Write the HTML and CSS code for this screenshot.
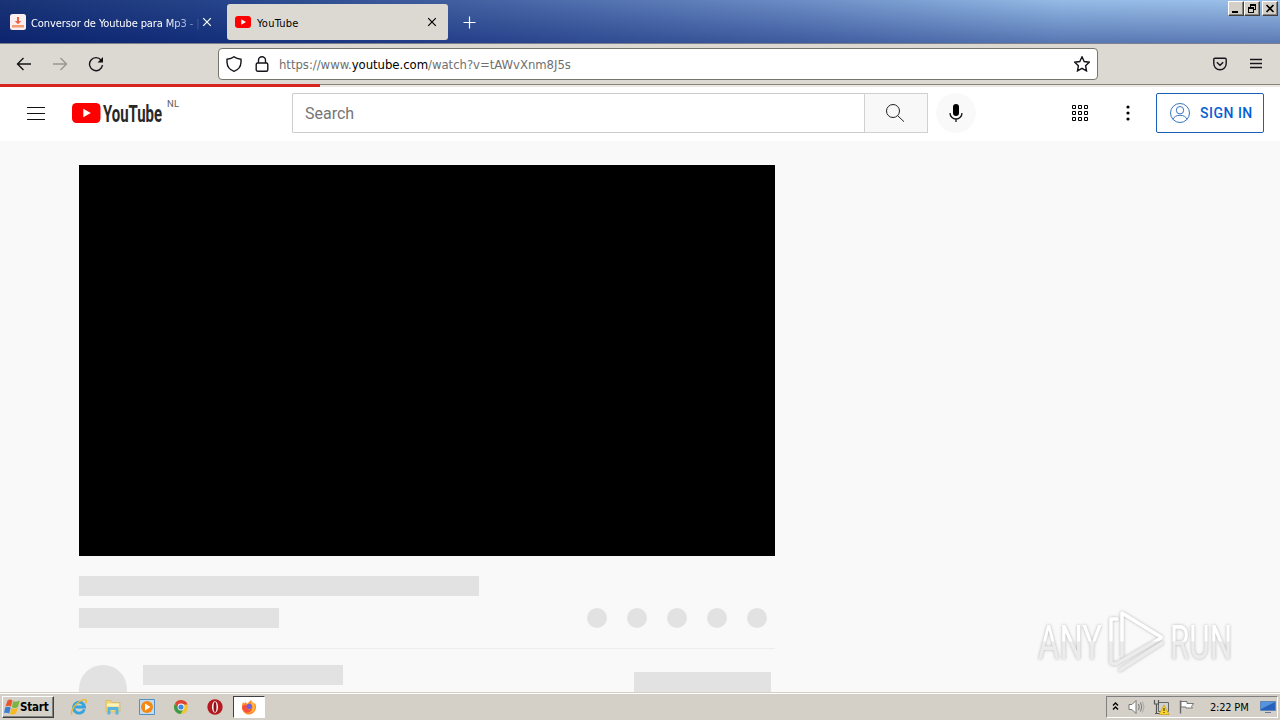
FILE: index.html
```
<!DOCTYPE html>
<html lang="en">
<head>
	<meta charset="UTF-8">
	<title>YouTube</title>
	<link rel="stylesheet" href="styles.css">
</head>
<body>
	<div class="tabs">
		<div class="tab">
			<svg class="favicon" width="16" height="16" viewBox="0 0 16 16"><rect width="16" height="16" rx="2.500" fill="#fbeeee"/><path d="M7 3h2v4h2.200L8 10.300 4.800 7H7z" fill="#ed6248"/><path d="M2 11h12v2.500H2z" fill="#f39a76"/></svg>
			<span class="tab-title fade">Conversor de Youtube para Mp3 - <i>|</i></span>
			<svg class="close" width="10" height="10" viewBox="0 0 10 10"><path d="M1.200 1.200l7.600 7.600M8.800 1.200L1.200 8.800"/></svg>
		</div>
		<div class="tab active">
			<svg class="favicon" width="16" height="16" viewBox="0 0 16 16"><rect y="2" width="16" height="12" rx="3" fill="#f00"/><path d="M6.300 5.300v5.400L11 8z" fill="#fff"/></svg>
			<span class="tab-title">YouTube</span>
			<svg class="close" width="10" height="10" viewBox="0 0 10 10"><path d="M1.200 1.200l7.600 7.600M8.800 1.200L1.200 8.800"/></svg>
		</div>
		<svg class="plus" width="13" height="13" viewBox="0 0 13 13"><path d="M6.500 .5v12M.5 6.500h12"/></svg>
		<div class="win-buttons">
			<span><svg width="14" height="13" viewBox="0 0 14 13"><path d="M3 9h6v2H3z"/></svg></span>
			<span><svg width="14" height="13" viewBox="0 0 14 13"><path d="M5 2h6v6H9V7h1V4H6v1H5zM3 5h6v6H3zM4 7v3h4V7z" fill-rule="evenodd"/></svg></span>
			<span class="x"><svg width="14" height="13" viewBox="0 0 14 13"><path d="M3.500 3l7 7M10.500 3l-7 7" stroke="#000" stroke-width="1.700"/></svg></span>
		</div>
	</div>

	<div class="toolbar">
		<svg class="nav back" width="16" height="16" viewBox="0 0 16 16"><path d="M15 8H1.500M7.500 2L1.500 8l6 6"/></svg>
		<svg class="nav forward" width="16" height="16" viewBox="0 0 16 16"><path d="M1 8h13.500M8.500 2l6 6-6 6"/></svg>
		<svg class="nav reload" width="16" height="16" viewBox="0 0 16 16"><path d="M13.200 4.200A6.500 6.500 0 1 0 14.500 9"/><path d="M15 1v5.500H9.500z" fill="#111" stroke="none"/></svg>
		<div class="urlbar">
			<svg width="16" height="16" viewBox="0 0 16 16"><path d="M8 .8C6 2.500 3.500 3.100 1 3.300v3C1.200 10.500 4 14 8 15.300c4-1.300 6.800-4.800 7-9v-3C12.500 3.100 10 2.500 8 .8z"/></svg>
			<svg class="lock" width="14" height="16" viewBox="0 0 14 16"><rect x="1.200" y="7" width="11.600" height="8.200" rx="1.500"/><path d="M3.500 7V4.300a3.500 3.500 0 0 1 7 0V7"/></svg>
			<span class="url">https://www.<b>youtube.com</b>/watch?v=tAWvXnm8J5s</span>
			<svg class="star" width="16" height="16" viewBox="0 0 16 16"><path d="M8 .8l2.200 4.700 5 .7-3.600 3.500.9 5.200L8 12.400l-4.500 2.500.9-5.200L.8 6.200l5-.7z"/></svg>
		</div>
		<svg class="pocket" width="14" height="14" viewBox="0 0 14 14"><path d="M2 1.200h10q1.200 0 1.200 1.200V6.500a6.200 6.200 0 0 1-12.400 0V2.400Q.8 1.200 2 1.200zM3.800 5.200L7 8.300l3.200-3.100"/></svg>
		<svg class="app-menu" width="12" height="12" viewBox="0 0 12 12"><path d="M0 1.500h12M0 5.500h12M0 9.500h12"/></svg>
	</div>
	<div class="progress"><div class="progress-done"></div></div>

	<div class="masthead">
		<svg class="guide" width="18" height="13" viewBox="0 0 18 13"><path d="M0 .5h18M0 6.500h18M0 12.500h18" stroke="#111"/></svg>
		<svg class="logo" width="91" height="24" viewBox="0 0 91 24">
			<rect y="2" width="28.500" height="20" rx="4.500" fill="#f00"/><path d="M11.300 7.800v8.400l7.500-4.200z" fill="#fff"/>
			<text x="31" y="20.500" textLength="59" lengthAdjust="spacingAndGlyphs">YouTube</text>
		</svg>
		<span class="country">NL</span>
		<div class="search">Search</div>
		<div class="search-btn"><svg width="20" height="20" viewBox="0 0 20 20"><circle cx="8" cy="8" r="6.500" fill="none" stroke="#222"/><path d="M12.700 12.700l6.300 6" stroke="#222"/></svg></div>
		<div class="mic"><svg width="14" height="20" viewBox="0 0 14 20"><rect x="4" y="1" width="6" height="12" rx="3"/><path d="M1 10a6 6 0 0 0 12 0M7 16v3" fill="none" stroke="#111" stroke-width="1.300"/></svg></div>
		<svg class="apps" width="16" height="16" viewBox="0 0 16 16"><path d="M.5.500h3v3h-3zM6.500.500h3v3h-3zM12.500.500h3v3h-3zM.5 6.500h3v3h-3zM6.500 6.500h3v3h-3zM12.500 6.500h3v3h-3zM.5 12.500h3v3h-3zM6.500 12.500h3v3h-3zM12.500 12.500h3v3h-3z" fill="none" stroke="#000"/></svg>
		<svg class="dots" width="4" height="16" viewBox="0 0 4 16"><circle cx="2" cy="2" r="1.600"/><circle cx="2" cy="8" r="1.600"/><circle cx="2" cy="14" r="1.600"/></svg>
		<div class="sign-in">
			<svg width="20" height="20" viewBox="0 0 20 20"><circle cx="10" cy="10" r="9.500"/><circle cx="10" cy="7.200" r="3.700"/><path d="M3 16.300c1-2.700 3.500-4 7-4s6 1.300 7 4"/></svg>
			<span>SIGN IN</span>
		</div>
	</div>

	<div class="page">
		<div class="player"></div>
		<div class="bar title"></div>
		<div class="row">
			<div class="bar views"></div>
			<div class="actions"><i></i><i></i><i></i><i></i><i></i></div>
		</div>
		<div class="owner">
			<div class="avatar"></div>
			<div class="bar name"></div>
			<div class="bar subscribe"></div>
		</div>
	</div>

	<svg class="watermark" width="210" height="72" viewBox="0 0 210 72">
		<defs>
			<linearGradient id="wm" gradientUnits="userSpaceOnUse" x1="0" y1="0" x2="0" y2="72"><stop offset="0" stop-color="#fff"/><stop offset=".48" stop-color="#fff"/><stop offset=".5" stop-color="#ececec"/><stop offset="1" stop-color="#ebebeb"/></linearGradient>
		</defs>
		<g class="wm-shape" fill="url(#wm)">
			<text x="4" y="53" textLength="64" lengthAdjust="spacingAndGlyphs">ANY</text>
			<text x="136" y="53" textLength="62" lengthAdjust="spacingAndGlyphs">RUN</text>
			<path d="M88 50V7l39 24M127 32L82 58M83 13h-6v44l4 1M86 64l42-27" fill="none" stroke="url(#wm)" stroke-width="3.500" stroke-linejoin="round" stroke-linecap="round"/>
		</g>
	</svg>

	<div class="taskbar">
		<div class="start">
			<svg width="16" height="16" viewBox="0 0 16 16"><path d="M3.500 1.500C5.500 0 7 .5 8.500 1.500L7 7.500C5 6.500 3.500 6.500 1.500 7.500z" fill="#e9562a"/><path d="M9.300 2c2 1 4 .8 6.500-.5L14 8c-2 1.200-4 1.200-6.200.2z" fill="#7cb342"/><path d="M1.200 8.500c2-1 3.500-1 5.500 0L5.200 14.500c-2-1-3.500-1-5.200-.5z" fill="#3c7fd0"/><path d="M7.500 9c2 .9 4.200.9 6.200-.2L12 14.800c-2 1-4 1-6 .2z" fill="#f5b921"/></svg>
			<b>Start</b>
		</div>
		<div class="launch">
			<svg width="18" height="18" viewBox="0 0 18 18"><path d="M14.300 11.300A5.500 5.500 0 1 1 14.500 9H5" fill="none" stroke="#35a3dc" stroke-width="2.800"/><path d="M2 16.500C-.5 13 7 3.500 13 1.800c3.500-.8 4 1.200 2.500 3.700" fill="none" stroke="#ebb92e" stroke-width="1.400"/></svg>
			<svg width="18" height="18" viewBox="0 0 18 18"><path d="M2 2.500h5l1 2h8V14H2z" fill="#f0d67b" stroke="#d3b14e" stroke-width=".6"/><path d="M3 5.500h12v3H3z" fill="#fbf2bd"/><path d="M3.500 16.500V10q0-1 1-1h9q1 0 1 1v6.500h-3V12h-5v4.500z" fill="#5bb4df"/></svg>
			<svg width="18" height="18" viewBox="0 0 18 18"><path d="M1.500 1.500h15v15h-15z" fill="#c4dcf0" stroke="#5391c5"/><circle cx="9" cy="9" r="6" fill="#f58813"/><path d="M7 5.500v7L12.500 9z" fill="#fff"/></svg>
			<svg width="18" height="18" viewBox="0 0 18 18"><circle cx="9" cy="9" r="7" fill="#f0c52f"/><path d="M3 5.500A7 7 0 0 1 15.500 6.500H9L6 11z" fill="#dc4438"/><path d="M2.800 5.700A7 7 0 0 0 8.500 16l3-5H7z" fill="#3c9b4b"/><circle cx="9" cy="9" r="3.400" fill="#fff"/><circle cx="9" cy="9" r="2.600" fill="#4285e8"/></svg>
			<svg width="18" height="18" viewBox="0 0 18 18"><circle cx="9" cy="9" r="7.700" fill="#b51a20"/><ellipse cx="9" cy="9" rx="3" ry="5.800" fill="#fff"/><ellipse cx="9" cy="9" rx="1.500" ry="5" fill="#8c1218"/></svg>
		</div>
		<div class="task">
			<svg width="16" height="16" viewBox="0 0 16 16"><path d="M2 3l1 1.500L5 3l1 2 4-4c1 2 2 2 3 4l1-1c3 6-1 11.500-6 11.500S-1 10 2 3z" fill="#ff8a2b"/><path d="M10 1c1 3 4 3 3.700 8 0 3-3 5-6 4.500 5-1 5-7 2.300-9z" fill="#ffc33a"/><path d="M1 8c1-2 3-2.500 5-1.500L7.500 8 6 9.500c2 2 4 1 5 0-.5 3-3 4.500-6 4C2.500 12.500 1 10.500 1 8z" fill="#f7503a"/><circle cx="8.300" cy="7.500" r="2.700" fill="#6f5fe0"/></svg>
		</div>
		<div class="tray">
			<svg class="chev" width="7" height="10" viewBox="0 0 7 10"><path d="M1 3.500L3.500 1 6 3.500M1 7.500L3.500 5 6 7.500" fill="none" stroke="#000" stroke-width="1.400"/></svg>
			<svg width="17" height="16" viewBox="0 0 17 16"><path d="M1 5.500h3l4-4v13l-4-4H1z" fill="#fff" stroke="#777"/><path d="M10.500 5q1.500 3 0 6M12.500 3.500q2.500 4.500 0 9" fill="none" stroke="#777"/><path d="M14.500 2.500q3 5.500 0 11" fill="none" stroke="#aaa"/></svg>
			<svg width="17" height="16" viewBox="0 0 17 16"><path d="M5.500 3.500h10v9h-10z" fill="#cfd0d0" stroke="#666"/><path d="M1.500 1v4h4V1M3.500 5v9M2 14.500h6" fill="none" stroke="#555" stroke-width="1.200"/><path d="M11 6l5 9.500H6z" fill="#fbd52c" stroke="#c49b10" stroke-width=".7"/><path d="M10.500 9h1v3h-1zM10.500 13h1v1h-1z" fill="#222"/></svg>
			<svg width="17" height="16" viewBox="0 0 17 16"><path d="M2.500 1.500v13" stroke="#666" stroke-width="1.400"/><path d="M3 2.500h6v2h6.500l-2 3 1 1.500H8V8H3z" fill="#fff" stroke="#777"/></svg>
			<span class="clock">2:22 PM</span>
			<svg class="desktop" width="16" height="14" viewBox="0 0 16 14"><path d="M.5 1.500h15v9H.5z" fill="#2761bb" stroke="#5e86bd"/><path d="M1 2h14L1 9z" fill="#5794de"/><path d="M5 12h6v1H5z" fill="#657a9b"/></svg>
		</div>
	</div>
</body>
</html>
```
FILE: styles.css
```
*{
	margin: 0;
	padding: 0;
	box-sizing: border-box;
}
body{
	width: 1280px;
	height: 720px;
	overflow: hidden;
	display: flex;
	flex-direction: column;
	background: #f9f9f9;
	font-family: Roboto, "Liberation Sans", sans-serif;
}
svg{
	display: block;
	flex-shrink: 0;
}
.tabs{
	height: 44px;
	display: flex;
	align-items: flex-start;
	padding-top: 4px;
	background: linear-gradient(to bottom, rgba(255,255,255,.05), rgba(10,30,110,.42)), linear-gradient(to right, #0d286e 0, #1b3b84 220px, #3d5da0 500px, #6487c2 800px, #8fb7e4 1060px, #97bde8 1280px);
	border-bottom: 1px solid #7b7f8c;
}
.tab{
	width: 221px;
	height: 36px;
	margin-right: 2px;
	padding: 0 11px 0 8px;
	display: flex;
	align-items: center;
	border-radius: 3px;
	color: #fff;
	font: 11px "DejaVu Sans Condensed", "DejaVu Sans", sans-serif;
}
.tab:first-child{
	width: 225px;
	padding: 0 13px 0 10px;
}
.tab.active{
	background: #dcd9d3;
	color: #000;
}
.tab-title{
	flex: 1;
	margin: 2px 2px 0 5px;
	overflow: hidden;
	white-space: nowrap;
	letter-spacing: -.1px;
}
.active .tab-title{
	margin-left: 6px;
	letter-spacing: .25px;
}
.tab-title i{
	font-style: normal;
	opacity: .5;
}
.fade{
	-webkit-mask-image: linear-gradient(to right, #000 80%, rgba(0,0,0,.3));
	mask-image: linear-gradient(to right, #000 80%, rgba(0,0,0,.3));
}
.close, .plus{
	fill: none;
	stroke: currentColor;
	stroke-width: 1.2;
}
.plus{
	margin: 12px 0 0 13px;
	color: #fff;
}
.win-buttons{
	display: flex;
	margin: -3px 2px 0 auto;
}
.win-buttons span{
	width: 16px;
	height: 15px;
	background: #d4d0c8;
	border: 1px solid;
	border-color: #fff #404040 #404040 #fff;
	box-shadow: inset -1px -1px #87847d;
}
.win-buttons .x{
	margin-left: 2px;
}
.toolbar{
	height: 41px;
	display: flex;
	align-items: center;
	background: #dcd9d3;
	border-bottom: 1px solid #86837d;
}
.toolbar svg{
	fill: none;
	stroke: #15141a;
	stroke-width: 1.4;
}
.nav{
	margin-right: 20px;
}
.back{
	margin-left: 16px;
}
.toolbar .forward{
	stroke: #999791;
}
.urlbar{
	width: 880px;
	height: 32px;
	margin-left: 94px;
	padding: 0 7px;
	display: flex;
	align-items: center;
	background: #fff;
	border: 1px solid #77746e;
	border-radius: 4px;
}
.lock{
	margin-left: 13px;
}
.url{
	flex: 1;
	margin: 1px 0 0 10px;
	font: 13px "DejaVu Sans Condensed", "DejaVu Sans", sans-serif;
	color: #707070;
	letter-spacing: -.04px;
}
.url b{
	font-weight: normal;
	color: #000;
}
.pocket{
	margin-left: 115px;
}
.app-menu{
	margin-left: 23px;
}
.progress{
	height: 2px;
	background: #ebe8e2;
}
.progress-done{
	width: 320px;
	height: 3px;
	margin-top: -1px;
	background: #d6261f;
}
.masthead{
	height: 54px;
	padding: 0 16px 2px 27px;
	display: flex;
	align-items: center;
	background: #fff;
}
.logo{
	margin-left: 27px;
	overflow: visible;
}
.logo text{
	font: bold 23px "Liberation Sans Narrow", Roboto, sans-serif;
	fill: #282828;
}
.country{
	width: 14px;
	margin: -18px 0 0 4px;
	font-size: 9.5px;
	line-height: 10px;
	letter-spacing: .2px;
	color: #606060;
}
.search{
	width: 572px;
	height: 40px;
	margin-left: 111px;
	padding-left: 12px;
	border: 1px solid #ccc;
	border-right: 0;
	border-radius: 2px 0 0 2px;
	font-size: 16px;
	line-height: 39px;
	color: #757575;
}
.search-btn{
	width: 64px;
	height: 40px;
	padding-right: 2px;
	border: 1px solid #d0d0d0;
	background: #f8f8f8;
	display: flex;
	align-items: center;
	justify-content: center;
}
.mic{
	width: 40px;
	height: 40px;
	margin-left: 8px;
	border-radius: 50%;
	background: #f9f9f9;
	display: flex;
	align-items: center;
	justify-content: center;
}
.apps{
	margin-left: 96px;
}
.dots{
	margin-left: 38px;
}
.sign-in{
	width: 108px;
	height: 40px;
	margin-left: auto;
	padding-left: 13px;
	display: flex;
	align-items: center;
	border: 1px solid #1b5eb8;
	border-radius: 2px;
	color: #065fd4;
	font-size: 14px;
	font-weight: 500;
	letter-spacing: .5px;
}
.sign-in svg{
	margin-right: 10px;
	fill: none;
	stroke: #3975bd;
}
.page{
	flex: 1;
	min-height: 0;
	width: 696px;
	margin-left: 79px;
	padding-top: 24px;
	overflow: hidden;
}
.player{
	height: 391px;
	background: #000;
}
.bar{
	height: 20px;
	background: #e2e2e2;
}
.title{
	width: 400px;
	margin: 20px 0 12px;
}
.row{
	height: 41px;
	padding-right: 8px;
	display: flex;
	justify-content: space-between;
	border-bottom: 1px solid #ededed;
}
.views{
	width: 200px;
}
.actions{
	display: flex;
	gap: 20px;
}
.actions i{
	width: 20px;
	height: 20px;
	border-radius: 50%;
	background: #e2e2e2;
}
.owner{
	display: flex;
	margin-top: 16px;
}
.avatar{
	width: 48px;
	height: 48px;
	border-radius: 50%;
	background: #e2e2e2;
}
.name{
	width: 200px;
	margin-left: 16px;
}
.subscribe{
	width: 137px;
	height: 37px;
	margin: 7px 4px 0 auto;
}
.watermark{
	position: absolute;
	left: 1034px;
	top: 606px;
}
.wm-shape{
	filter: drop-shadow(0 0 1.5px rgba(0,0,0,.28));
}
.watermark text{
	font: 48px "Liberation Sans Narrow", Roboto, sans-serif;
}
.taskbar{
	height: 28px;
	padding: 3px 2px 2px;
	display: flex;
	align-items: center;
	background: #d4d0c8;
	border-top: 1px solid #d4d0c8;
	box-shadow: inset 0 1px #fff;
}
.start{
	width: 52px;
	height: 22px;
	padding-left: 1px;
	display: flex;
	align-items: center;
	border: 1px solid;
	border-color: #fff #404040 #404040 #fff;
	box-shadow: inset -1px -1px #808080;
	font: 11.5px "DejaVu Sans Condensed", "DejaVu Sans", sans-serif;
}
.start b{
	letter-spacing: -.2px;
}
.launch{
	display: flex;
	gap: 16px;
	margin-left: 16px;
}
.task{
	width: 32px;
	height: 22px;
	margin-left: 9px;
	padding: 2px 0 0 7px;
	background: #fff;
	border: 1px solid;
	border-color: #404040 #fff #fff #404040;
}
.tray{
	width: 172px;
	height: 22px;
	margin-left: auto;
	padding: 0 1px 0 5px;
	display: flex;
	align-items: center;
	gap: 8px;
	border: 1px solid;
	border-color: #808080 #fff #fff #808080;
	font: 11px "DejaVu Sans Condensed", "DejaVu Sans", sans-serif;
}
.tray .chev{
	margin-right: 1px;
}
.clock{
	margin-left: 7px;
	white-space: nowrap;
	letter-spacing: -.2px;
}
.desktop{
	margin-left: auto;
}
```
